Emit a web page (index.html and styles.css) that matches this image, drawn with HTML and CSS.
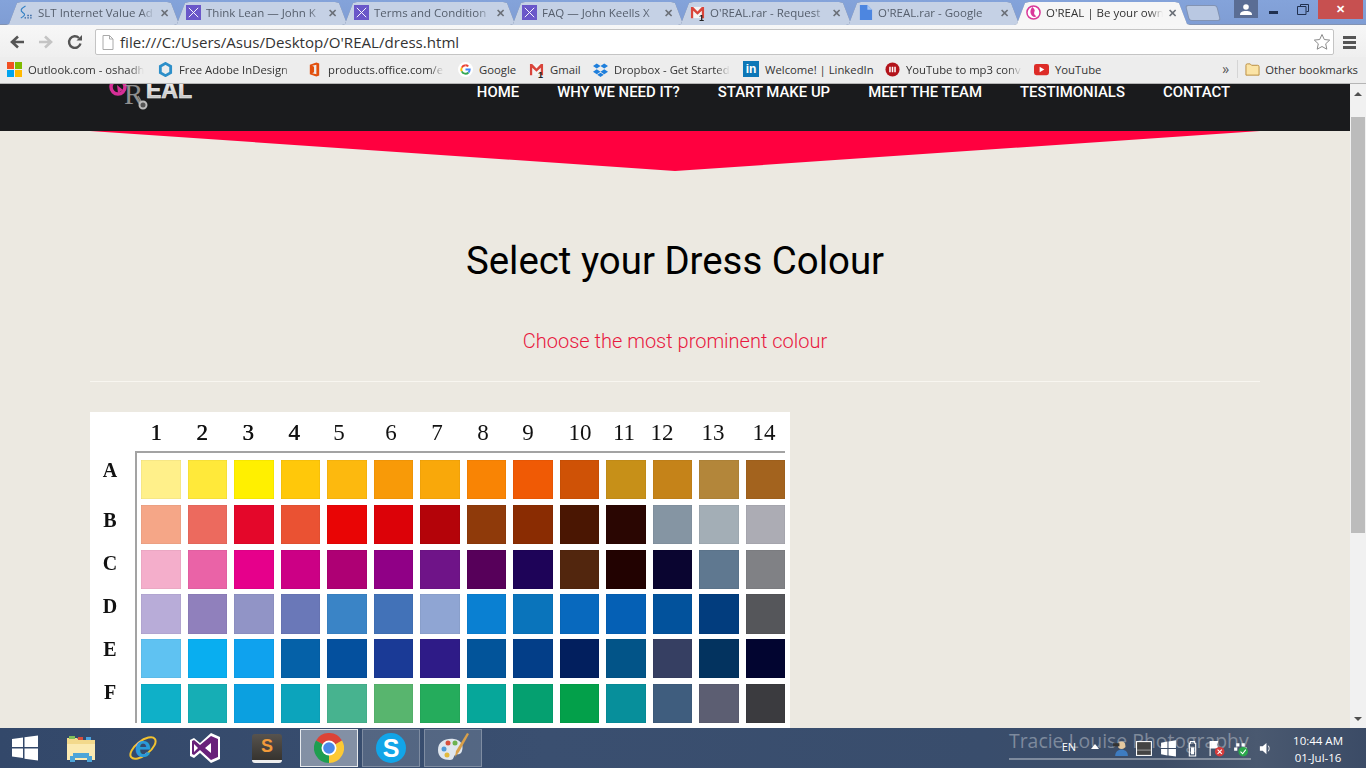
FILE: index.html
```html
<!DOCTYPE html>
<html lang="en">
<head>
<meta charset="utf-8">
<title>O'REAL | Be your own</title>
<link rel="stylesheet" href="styles.css">
</head>
<body>
<svg class="sprite" aria-hidden="true">
  <symbol id="i-x" viewBox="0 0 16 16"><rect width="16" height="16" fill="#6a57c9"/><path d="M3 3l10 10M13 3L3 13" stroke="#fff" stroke-width="1" fill="none"/></symbol>
  <symbol id="i-slt" viewBox="0 0 16 16"><path d="M8 1C3 4 2 6 5 8s3 3-2 6" stroke="#2f7fc4" stroke-width="1.2" fill="none"/><path d="M7 13h1.500v1.500H7zM10 13h1.500v1.500H10zM13 13h1.500v1.500H13zM10 10.500h1.500V12H10zM13 10.500h1.500V12H13z" fill="#2a5f9e"/></symbol>
  <symbol id="i-gmail" viewBox="0 0 16 16"><path d="M1 2h14v12H1z" fill="#f4f4f4"/><path d="M1 2h2.400L8 7l4.600-5H15v12h-2.400V6L8 10.500 3.400 6v8H1z" fill="#d9453b"/></symbol>
  <symbol id="i-doc" viewBox="0 0 16 16"><path d="M2 0h8l5 5v11H2z" fill="#4d86e0"/><path d="M10 0l5 5h-5z" fill="#a9c6f2"/></symbol>
  <symbol id="i-oreal" viewBox="0 0 16 16"><circle cx="8" cy="8" r="7" fill="#fff" stroke="#d9389a" stroke-width="1.600"/><path d="M7 2c-3 3-3 7 0 10 1 1 3 1 4 0-2-1-3-3-2-5 1-1 0-3-2-5z" fill="#d9389a"/></symbol>
</svg>

<div class="tabstrip">
  <div class="tab"><svg class="fav"><use href="#i-slt"/></svg><span class="tab-title">SLT Internet Value Ad</span><span class="tab-x">✕</span></div>
  <div class="tab"><svg class="fav"><use href="#i-x"/></svg><span class="tab-title">Think Lean — John K</span><span class="tab-x">✕</span></div>
  <div class="tab"><svg class="fav"><use href="#i-x"/></svg><span class="tab-title">Terms and Condition</span><span class="tab-x">✕</span></div>
  <div class="tab"><svg class="fav"><use href="#i-x"/></svg><span class="tab-title">FAQ — John Keells X</span><span class="tab-x">✕</span></div>
  <div class="tab"><span class="badged"><svg class="fav"><use href="#i-gmail"/></svg><span class="badge">1</span></span><span class="tab-title">O'REAL.rar - Request</span><span class="tab-x">✕</span></div>
  <div class="tab"><svg class="fav"><use href="#i-doc"/></svg><span class="tab-title">O'REAL.rar - Google</span><span class="tab-x">✕</span></div>
  <div class="tab tab-active"><svg class="fav"><use href="#i-oreal"/></svg><span class="tab-title">O'REAL | Be your own</span><span class="tab-x">✕</span></div>
  <div class="newtab"></div>
  <div class="winbtns">
    <div class="profile"><svg width="12" height="11" viewBox="0 0 12 11"><circle cx="6" cy="3" r="2.800" fill="#fff"/><path d="M0 11c0-3 2-4 6-4s6 1 6 4z" fill="#fff"/></svg></div>
    <div class="winbtn"><span class="min"></span></div>
    <div class="winbtn"><svg width="12" height="11" viewBox="0 0 12 11"><path d="M3.500 2.500V.5h8v7h-2M.5 2.500h8.500v8H.5z" fill="none" stroke="#20304f"/></svg></div>
    <div class="close">✕</div>
  </div>
</div>

<div class="toolbar">
  <svg class="navicon" viewBox="0 0 16 16"><path d="M15 8H4M9 2.500L3 8l6 5.500" fill="none" stroke="#555" stroke-width="2.600"/></svg>
  <svg class="navicon" viewBox="0 0 16 16"><path d="M1 8h11M7 2.500L13 8l-6 5.500" fill="none" stroke="#c4c4c4" stroke-width="2.600"/></svg>
  <svg class="navicon" viewBox="0 0 16 16"><path d="M13.500 9.500A5.800 5.800 0 1 1 12 4" fill="none" stroke="#555" stroke-width="2.400"/><path d="M9.500 6.500H15V1z" fill="#555"/></svg>
  <div class="omnibox">
    <svg class="pageicon" width="12" height="15" viewBox="0 0 12 15"><path d="M1 .5h6.500l3.500 3.500v10.500H1z" fill="#fff" stroke="#aaa"/><path d="M7.500.5V4H11" fill="none" stroke="#aaa"/></svg>
    <span class="url">file:///C:/Users/Asus/Desktop/O'REAL/dress.html</span>
    <svg class="star" width="18" height="18" viewBox="0 0 18 18"><path d="M9 1.500l2.300 5 5.400.6-4 3.700 1.100 5.400L9 13.500l-4.800 2.700 1.100-5.400-4-3.700 5.400-.6z" fill="#fff" stroke="#8a8a8a"/></svg>
  </div>
  <div class="menu"><span></span><span></span><span></span></div>
</div>

<div class="bookmarks">
  <div class="bm-grid">
    <div class="bm"><svg class="bmi" viewBox="0 0 16 16"><path d="M0 0h7.500v7.500H0z" fill="#f25022"/><path d="M8.500 0H16v7.500H8.500z" fill="#7fba00"/><path d="M0 8.500h7.500V16H0z" fill="#00a4ef"/><path d="M8.500 8.500H16V16H8.500z" fill="#ffb900"/></svg><span class="bm-t bm-fade">Outlook.com - oshadh</span></div>
    <div class="bm"><svg class="bmi" viewBox="0 0 16 16"><path d="M8 1.500l5.500 3.200v6.600L8 14.500l-5.500-3.200V4.700z" fill="none" stroke="#2d8fc9" stroke-width="3"/></svg><span class="bm-t bm-fade">Free Adobe InDesign</span></div>
    <div class="bm"><svg class="bmi" viewBox="0 0 16 16"><path d="M10 .5L3 3v10l7 2.500 3-1.200V1.700zM10 3v10L5.500 12l2-1V5l-2-1z" fill="#e2500e"/></svg><span class="bm-t bm-fade">products.office.com/e</span></div>
    <div class="bm"><svg class="bmi" viewBox="0 0 16 16"><circle cx="8" cy="8" r="8" fill="#fff"/><path d="M8 3.500a4.500 4.500 0 0 0-4 2.500" fill="none" stroke="#ea4335" stroke-width="2"/><path d="M4 6a4.500 4.500 0 0 0 0 4" fill="none" stroke="#fbbc05" stroke-width="2"/><path d="M4 10a4.500 4.500 0 0 0 7.200 1.200" fill="none" stroke="#34a853" stroke-width="2"/><path d="M11.200 11.200A4.500 4.500 0 0 0 12.500 8H8" fill="none" stroke="#4285f4" stroke-width="2"/><path d="M8 3.500a4.500 4.500 0 0 1 3 1.200" fill="none" stroke="#ea4335" stroke-width="2"/></svg><span class="bm-t">Google</span></div>
    <div class="bm"><span class="badged"><svg class="bmi" viewBox="0 0 16 16"><use href="#i-gmail"/></svg><span class="badge">1</span></span><span class="bm-t">Gmail</span></div>
    <div class="bm"><svg class="bmi" viewBox="0 0 16 16"><path d="M4 1.500L0 4.300l4 2.700 4-2.700zM12 1.500L8 4.300l4 2.700 4-2.700zM4 7.600L0 10.300 4 13l4-2.700zM12 7.600l-4 2.700 4 2.700 4-2.700zM4.500 13.700l3.500 2.300 3.500-2.300L8 11.400z" fill="#1f7fdc"/></svg><span class="bm-t bm-fade">Dropbox - Get Started</span></div>
    <div class="bm"><span class="li">in</span><span class="bm-t">Welcome! | LinkedIn</span></div>
    <div class="bm"><svg class="bmi" viewBox="0 0 16 16"><circle cx="8" cy="8" r="7.500" fill="#b3141b"/><path d="M4.500 5h1.600v6H4.500zM7.200 5h1.600v6H7.200zM9.900 5h1.600v6H9.900z" fill="#fff"/></svg><span class="bm-t bm-fade">YouTube to mp3 conv</span></div>
    <div class="bm"><svg class="bmi" viewBox="0 0 16 16"><rect y="2" width="16" height="12" rx="2.500" fill="#dd2c28"/><path d="M6 5l5 3-5 3z" fill="#fff"/></svg><span class="bm-t">YouTube</span></div>
  </div>
  <div class="bm-right">
    <span class="chev">»</span>
    <span class="bm-sep"></span>
    <svg class="bmi" viewBox="0 0 16 16"><path d="M1 14V3.500C1 2.500 1.500 2 2.500 2h3l1.500 1.500h6.500c1 0 1.500.5 1.500 1.500v9z" fill="#fbe4a6" stroke="#b98c3d"/></svg>
    <span class="bm-t">Other bookmarks</span>
  </div>
</div>

<div class="viewport">
  <div class="page">
    <header class="site-header">
      <svg class="logo" width="90" height="28" viewBox="0 0 90 28">
        <defs><linearGradient id="chrome" x1="0" y1="0" x2="0" y2="1"><stop offset="0" stop-color="#fff"/><stop offset="1" stop-color="#b5b5b5"/></linearGradient></defs>
        <circle cx="10" cy="3" r="7" fill="none" stroke="#d62f97" stroke-width="3.500"/>
        <path d="M9 1l6 5-5 3z" fill="#d62f97"/>
        <text x="16" y="20" class="logo-r">R</text>
        <path d="M30 12l4 7" stroke="#8a8a8a" stroke-width="1.500"/>
        <circle cx="35" cy="21" r="3.500" fill="#555" stroke="#bbb" stroke-width="2"/>
        <text x="38" y="14" class="logo-eal" fill="url(#chrome)">EAL</text>
      </svg>
      <nav class="site-nav">
        <a>Home</a><a>Why we need it?</a><a>Start make up</a><a>Meet the team</a><a>Testimonials</a><a>Contact</a>
      </nav>
    </header>
    <div class="wedge"></div>
    <main class="container">
      <h1 class="title">Select your Dress Colour</h1>
      <p class="subtitle">Choose the most prominent colour</p>
      <hr class="rule">
      <div class="chart">
        <div class="chart-cols">
          <span>1</span><span>2</span><span>3</span><span>4</span><span>5</span><span>6</span><span>7</span><span>8</span><span>9</span><span>10</span><span>11</span><span>12</span><span>13</span><span>14</span>
        </div>
        <div class="chart-body">
          <div class="chart-rows"><span>A</span><span>B</span><span>C</span><span>D</span><span>E</span><span>F</span></div>
          <div class="swatches">
            <i style="background:#fff08a"></i><i style="background:#ffe93a"></i><i style="background:#fff000"></i><i style="background:#ffc80a"></i><i style="background:#fdb90e"></i><i style="background:#f89a08"></i><i style="background:#f9a80a"></i><i style="background:#f98404"></i><i style="background:#f05a05"></i><i style="background:#cf5206"></i><i style="background:#c79018"></i><i style="background:#c58319"></i><i style="background:#b3863a"></i><i style="background:#a3631e"></i>
            <i style="background:#f5a687"></i><i style="background:#ec6a5e"></i><i style="background:#e4072a"></i><i style="background:#ea5233"></i><i style="background:#e90505"></i><i style="background:#dc0208"></i><i style="background:#b40309"></i><i style="background:#8f3a0a"></i><i style="background:#8a2c02"></i><i style="background:#4a1602"></i><i style="background:#2a0602"></i><i style="background:#8595a3"></i><i style="background:#a3aeb6"></i><i style="background:#acacb4"></i>
            <i style="background:#f4aecb"></i><i style="background:#ea63a7"></i><i style="background:#e6008b"></i><i style="background:#cc0085"></i><i style="background:#ae0074"></i><i style="background:#900086"></i><i style="background:#6f1488"></i><i style="background:#57005a"></i><i style="background:#1e0358"></i><i style="background:#52260e"></i><i style="background:#220201"></i><i style="background:#0a0530"></i><i style="background:#5f7890"></i><i style="background:#808185"></i>
            <i style="background:#b8acd8"></i><i style="background:#9080bc"></i><i style="background:#9194c6"></i><i style="background:#6a78b8"></i><i style="background:#3a84c6"></i><i style="background:#4272b8"></i><i style="background:#8fa5d3"></i><i style="background:#0a80d2"></i><i style="background:#0a74bb"></i><i style="background:#0869be"></i><i style="background:#0560b5"></i><i style="background:#02529c"></i><i style="background:#023d7e"></i><i style="background:#55565a"></i>
            <i style="background:#5fc2f2"></i><i style="background:#09aef0"></i><i style="background:#0fa2ee"></i><i style="background:#0561a8"></i><i style="background:#04509e"></i><i style="background:#1a3a96"></i><i style="background:#2e1b87"></i><i style="background:#02549a"></i><i style="background:#033e88"></i><i style="background:#021f5e"></i><i style="background:#025488"></i><i style="background:#363f62"></i><i style="background:#03335f"></i><i style="background:#020530"></i>
            <i style="background:#0fb0c8"></i><i style="background:#16aeb5"></i><i style="background:#0ba0e0"></i><i style="background:#0ca4bc"></i><i style="background:#47b38f"></i><i style="background:#58b56e"></i><i style="background:#25ac5c"></i><i style="background:#06a79a"></i><i style="background:#05a070"></i><i style="background:#03a04a"></i><i style="background:#078f9b"></i><i style="background:#3f5d7e"></i><i style="background:#5c5e72"></i><i style="background:#3b3b3f"></i>
          </div>
        </div>
      </div>
    </main>
  </div>
  <div class="scrollbar">
    <svg class="sb-arrow" width="16" height="16" viewBox="0 0 16 16"><path d="M4 10l4-4 4 4z" fill="#505050"/></svg>
    <div class="sb-thumb"></div>
    <svg class="sb-arrow sb-down" width="16" height="16" viewBox="0 0 16 16"><path d="M4 6l4 4 4-4z" fill="#505050"/></svg>
  </div>
</div>

<footer class="taskbar">
  <div class="start"><svg width="26" height="26" viewBox="0 0 26 26"><path d="M0 4l11-1.500V12H0zM12.500 2.200L26 .5V12H12.500zM0 13.500h11V23L0 21.500zM12.500 13.500H26V25.500L12.500 23.800z" fill="#fff"/></svg></div>
  <div class="task"><svg width="32" height="32" viewBox="0 0 32 32"><path d="M2 6h10l2 2h16v20H2z" fill="#f3d98c"/><path d="M2 12h28v16H2z" fill="#fbeab2"/><path d="M4 4h6v3H4z" fill="#7fbf5a"/><path d="M13 5h5v3h-5z" fill="#d8503e"/><path d="M21 5h5v3h-5z" fill="#4aa3df"/><path d="M8 21h16v3h3v6h-5v-4H10v4H5v-6h3z" fill="#4da5d8"/></svg></div>
  <div class="task"><svg width="32" height="32" viewBox="0 0 32 32"><ellipse cx="16" cy="16" rx="15" ry="7" transform="rotate(-38 16 16)" fill="none" stroke="#f2c230" stroke-width="2"/><text x="16" y="25" class="ie-e">e</text></svg></div>
  <div class="task"><svg width="32" height="32" viewBox="0 0 32 32"><path d="M22 1l9 4v22l-9 4-11-10-6 5-4-2V8l4-2 6 5z" fill="#fff"/><path d="M22 4l7 3v18l-7 3-11-10-6 5-2-1V9l2-1 6 5zM22 11l-6 5 6 5zM5 12v8l4-4z" fill="#68217a" fill-rule="evenodd"/></svg></div>
  <div class="task"><div class="sublime">S</div></div>
  <div class="task task-on"><svg width="30" height="30" viewBox="0 0 30 30"><path d="M15 15L2 7.500A15 15 0 0 1 28 7.500z" fill="#dc4437"/><path d="M15 15L28 7.500A15 15 0 0 1 15 30z" fill="#fcc934"/><path d="M15 15V30A15 15 0 0 1 2 7.500z" fill="#1e9e50"/><circle cx="15" cy="15" r="7.500" fill="#fff"/><circle cx="15" cy="15" r="5.800" fill="#4a89e8"/></svg></div>
  <div class="task task-open"><div class="skype">S</div></div>
  <div class="task task-open"><svg width="34" height="32" viewBox="0 0 34 32"><path d="M2 18C2 9 10 6 18 7c7 1 10 6 8 12-1 4-5 3-7 4-2 2-1 5-5 5-7 0-12-3-12-10z" fill="#dfe6ee"/><circle cx="8" cy="17" r="2.500" fill="#4f9ad8"/><circle cx="12" cy="11" r="2.500" fill="#d8503e"/><circle cx="19" cy="11" r="2.500" fill="#6db24f"/><circle cx="11" cy="23" r="2.500" fill="#e2b93b"/><path d="M31 1l2 1-10 18-4 5 1-6z" fill="#d9a04a"/></svg></div>
  <div class="wallpaper-text">Tracie Louise Photography</div>
  <div class="tray">
    <span class="lang">EN</span>
    <svg class="tray-up" width="8" height="5" viewBox="0 0 8 5"><path d="M0 5l4-5 4 5z" fill="#fff"/></svg>
    <svg class="tray-i" viewBox="0 0 16 16"><circle cx="9" cy="5" r="3.500" fill="#e5c9a0"/><path d="M3 15c0-4 3-6 6-6s6 2 6 6z" fill="#3e7cc0"/><path d="M1 3h6v3H1z" fill="#333"/></svg>
    <svg class="tray-i" viewBox="0 0 16 16"><rect x=".5" y="1.500" width="14" height="13" fill="#444" stroke="#fff"/><path d="M1 9.500h13" stroke="#999"/></svg>
    <svg class="tray-i" viewBox="0 0 16 16"><path d="M1 2.500l6-1V7.500H1zM8 1.300l7-1V7.500H8zM1 8.500h6v6l-6-1zM8 8.500h7v7l-7-1z" fill="#fff"/></svg>
    <svg class="tray-i" viewBox="0 0 16 16"><path d="M5 3h1V1.500h4V3h1v12H5z" fill="none" stroke="#fff"/><path d="M6.500 7h3v6.500h-3z" fill="#fff"/></svg>
    <svg class="tray-i" viewBox="0 0 16 16"><path d="M2 1v14M3 1.500h6l-1 3 1 3H3z" stroke="#fff" fill="#fff"/><circle cx="11" cy="11" r="4.500" fill="#d83b3b"/><path d="M9 9l4 4M13 9l-4 4" stroke="#fff"/></svg>
    <svg class="tray-i" viewBox="0 0 16 16"><path d="M4 3h3v3H4zM9 3h3v3H9zM2 7h3v3H2zM11 7h3v3h-3z" fill="#fff"/><circle cx="10.500" cy="11" r="4.500" fill="#2aa84a"/><path d="M8 11l2 2 3-4" stroke="#fff" fill="none"/></svg>
    <svg class="tray-i tray-vol" viewBox="0 0 16 16"><path d="M2 5.500h3L9 2v12L5 10.500H2z" fill="#fff"/><path d="M11 5c1.200 2 1.200 4 0 6" stroke="#fff" fill="none"/></svg>
    <div class="clock"><span>10:44 AM</span><span>01-Jul-16</span></div>
  </div>
</footer>
</body>
</html>
```

FILE: styles.css
```css
* { box-sizing: border-box; }
html, body { margin: 0; height: 100%; }
body {
  width: 1366px;
  height: 768px;
  overflow: hidden;
  display: flex;
  flex-direction: column;
  font-family: "Open Sans", "Liberation Sans", sans-serif;
  background: #ece9e1;
}
.sprite { display: none; }

/* tab strip */
.tabstrip {
  height: 25px;
  flex: none;
  display: flex;
  padding-left: 6px;
  background: linear-gradient(#84a3da, #7f9dd4);
  box-shadow: inset 0 -1px 0 #8293b3;
  position: relative;
}
.tab {
  position: relative;
  isolation: isolate;
  width: 176px;
  height: 25px;
  margin-right: -8px;
  padding: 0 13px 0 12px;
  display: flex;
  align-items: center;
  gap: 5px;
  font-size: 11.500px;
  color: #555e6c;
  filter: drop-shadow(0 0 .6px #5d6f92);
}
.tab::before {
  content: "";
  position: absolute;
  inset: 2px 0 0;
  z-index: -1;
  background: #c5d1e5;
  clip-path: polygon(0 100%, 3px 96%, 11px 4%, 15px 0, calc(100% - 15px) 0, calc(100% - 11px) 4%, calc(100% - 3px) 96%, 100% 100%);
}
.tab-active { z-index: 2; color: #333; }
.tab-active::before { background: #f6f6f6; }
.fav { width: 15px; height: 15px; flex: none; }
.tab-title {
  flex: 1;
  min-width: 0;
  white-space: nowrap;
  overflow: hidden;
  -webkit-mask-image: linear-gradient(90deg, #000 88%, transparent 100%);
  mask-image: linear-gradient(90deg, #000 88%, transparent 100%);
}
.tab-x { flex: none; font-size: 11px; font-weight: 700; color: #6b7078; }
.badged { position: relative; display: flex; flex: none; }
.badge {
  position: absolute;
  right: 1px;
  bottom: -3px;
  font: 700 9px/9px "Liberation Sans", sans-serif;
  color: #222;
}
.newtab {
  width: 30px;
  height: 14px;
  margin: 6px 0 0 6px;
  background: #b9c8e2;
  border-radius: 2px;
  transform: skewX(14deg);
  box-shadow: 0 0 0 1px #8293b3;
}
.winbtns { margin-left: auto; display: flex; align-items: flex-start; padding-right: 3px; }
.profile {
  width: 24px;
  height: 18px;
  background: #5a6d94;
  display: flex;
  align-items: center;
  justify-content: center;
}
.winbtn {
  width: 30px;
  height: 19px;
  display: flex;
  align-items: center;
  justify-content: center;
}
.min { width: 9px; height: 3px; margin-top: 6px; background: #20304f; }
.close {
  width: 45px;
  height: 19px;
  background: #c75050;
  color: #fff;
  font: 700 11px/19px "Liberation Sans", sans-serif;
  text-align: center;
}

/* toolbar */
.toolbar {
  height: 32px;
  flex: none;
  display: flex;
  align-items: center;
  padding: 2px 0 0 9px;
  gap: 13px;
  background: linear-gradient(#f7f7f7, #efefef);
}
.navicon { width: 16px; height: 16px; flex: none; }
.omnibox {
  width: 1239px;
  height: 26px;
  margin-left: -1px;
  display: flex;
  align-items: center;
  padding: 0 2px 0 6px;
  background: #fff;
  border: 1px solid #c4c4c4;
  border-radius: 2px;
  flex: none;
}
.pageicon { flex: none; margin-right: 6px; }
.url { font-size: 15.100px; color: #333; white-space: nowrap; font-family: "Open Sans", sans-serif; }
.star { margin-left: auto; }
.menu {
  display: flex;
  flex-direction: column;
  gap: 2px;
  width: 13px;
  margin-left: -4px;
}
.menu span { height: 3px; background: #555; }

/* bookmarks */
.bookmarks {
  height: 27px;
  flex: none;
  display: flex;
  align-items: center;
  padding: 0 0 2px 7px;
  background: #ededed;
  border-bottom: 1px solid #b5b5b5;
  font-size: 11.300px;
  color: #333;
}
.bm-grid {
  display: grid;
  grid-template-columns: 151px 149px 151px 71px 64px 150px 142px 149px auto;
}
.bm { display: flex; align-items: center; gap: 6px; white-space: nowrap; min-width: 0; }
.bmi { width: 15px; height: 15px; flex: none; }
.bm-fade {
  width: 116px;
  overflow: hidden;
  -webkit-mask-image: linear-gradient(90deg, #000 88%, transparent 100%);
  mask-image: linear-gradient(90deg, #000 88%, transparent 100%);
}
.li {
  width: 16px;
  height: 16px;
  flex: none;
  background: #0d77b7;
  color: #fff;
  font: 700 12px/16px "Liberation Sans", sans-serif;
  text-align: center;
}
.bm-right {
  margin-left: auto;
  display: flex;
  align-items: center;
  gap: 5px;
  padding-right: 8px;
  white-space: nowrap;
}
.chev { font-size: 14px; line-height: 14px; color: #555; margin-right: 3px; }
.bm-sep { width: 1px; height: 18px; background: #d5d5d5; margin-right: 2px; }

/* viewport */
.viewport { height: 644px; flex: none; display: flex; overflow: hidden; }
.page { width: 1350px; flex: none; overflow: hidden; background: #ece9e1; }
.site-header {
  height: 47px;
  background: #1a1b1d;
  display: flex;
  align-items: flex-start;
  padding-left: 108px;
}
.logo { flex: none; }
.logo-r { font: 400 29px "Liberation Serif", serif; fill: #8f8f8f; }
.logo-eal {
  font: 700 23px "Liberation Sans", sans-serif;
  stroke: #f2f2f2;
  stroke-width: .6px;
}
.site-nav {
  margin-left: auto;
  padding: 0 120px 0 0;
  display: flex;
  gap: 38px;
}
.site-nav a {
  font: 500 14.900px/16px Roboto, sans-serif;
  color: #fff;
  text-transform: uppercase;
}
.wedge {
  width: 1170px;
  height: 40px;
  margin: 0 auto;
  background: #ff003f;
  clip-path: polygon(0 0, 100% 0, 50% 100%);
}
.container { width: 1170px; margin: 0 auto; }
.title {
  margin: 69px 0 0;
  font: 400 38.400px/42px Roboto, sans-serif;
  color: #000;
  text-align: center;
}
.subtitle {
  margin: 47px 0 0;
  font: 300 20px/24px Roboto, sans-serif;
  color: #e8183f;
  text-align: center;
}
.rule {
  height: 1px;
  margin: 28px 0 0;
  border: 0;
  background: #f8f6f0;
}

/* colour chart */
.chart {
  width: 700px;
  height: 340px;
  margin-top: 30px;
  background: #fff;
  filter: blur(.5px);
}
.chart-cols {
  height: 39px;
  display: grid;
  grid-template-columns: 46px 46px 46px 46px 44px 60px 32px 60px 30px 74px 14px 62px 40px 62px;
  padding: 5px 0 0 43px;
  font: 400 23px/32px "Liberation Serif", serif;
  color: #111;
}
.chart-cols span { display: flex; justify-content: center; }
.chart-cols span:nth-child(-n+4) { text-shadow: .4px 0 0 #111; }
.chart-body { display: flex; }
.chart-rows {
  width: 45px;
  flex: none;
  display: flex;
  flex-direction: column;
  align-items: center;
  padding-right: 5px;
  margin-top: 7px;
  font: 700 20px/24px "Liberation Serif", serif;
  color: #111;
  gap: 19px;
}
.chart-rows span:first-child { margin-bottom: 7px; }
.swatches {
  display: grid;
  width: 650px;
  grid-template-columns: repeat(14, 39.500px);
  grid-auto-rows: 39.300px;
  gap: 5.500px 7px;
  padding: 7px 0 0 4px;
  border-top: 2px solid #a3a3a3;
  border-left: 2px solid #a3a3a3;
  margin-right: 5px;
}
.swatches i { display: block; box-shadow: inset 0 0 1px rgba(0, 0, 0, .35); }

/* scrollbar */
.scrollbar {
  width: 16px;
  flex: none;
  background: #f1f1f1;
  display: flex;
  flex-direction: column;
  padding-top: 2px;
}
.sb-arrow { flex: none; }
.sb-thumb { height: 416px; margin: 15px 1px 0; background: #bcbcbc; }
.sb-down { margin-top: auto; margin-bottom: 1px; }

/* taskbar */
.taskbar {
  height: 40px;
  flex: none;
  position: relative;
  display: flex;
  align-items: center;
  background: linear-gradient(90deg, #33486a 0, #3a4f70 40%, #394d6c 72%, #3d4d66 85%, #4a5970 92%, #3b4b66 100%);
}
.start { width: 50px; height: 40px; flex: none; display: flex; align-items: center; justify-content: center; }
.task { width: 62px; height: 40px; flex: none; display: flex; align-items: center; justify-content: center; }
.task-on, .task-open { width: 58px; height: 38px; margin: 0 2px; }
.task-open { background: rgba(255, 255, 255, .14); border: 1px solid rgba(255, 255, 255, .25); }
.task-on { background: rgba(255, 255, 255, .38); border: 1px solid rgba(255, 255, 255, .8); }
.ie-e { font: 700 30px "Liberation Sans", sans-serif; fill: #2a9ad8; text-anchor: middle; }
.sublime {
  width: 30px;
  height: 29px;
  border-radius: 3px;
  background: linear-gradient(#57534e, #36332f);
  border-bottom: 3px solid #eee;
  color: #f29a3a;
  font: 700 18px/25px "Liberation Sans", sans-serif;
  text-align: center;
}
.skype {
  width: 30px;
  height: 30px;
  border-radius: 50%;
  background: #12a5e8;
  color: #fff;
  font: 700 25px/30px "Liberation Sans", sans-serif;
  text-align: center;
}
.wallpaper-text {
  position: absolute;
  left: 1009px;
  top: 0;
  height: 32px;
  width: 242px;
  border-bottom: 2px solid rgba(255, 255, 255, .35);
  font: 400 19.400px/25px "Open Sans", sans-serif;
  color: rgba(255, 255, 255, .35);
  white-space: nowrap;
}
.tray {
  margin-left: auto;
  position: relative;
  display: flex;
  align-items: center;
  height: 40px;
  padding-right: 23px;
  color: #fff;
  font-size: 12px;
}
.lang { margin-right: 15px; font-size: 11px; margin-top: -4px; }
.tray-up { margin-right: 13px; margin-top: -4px; }
.tray-i { width: 17px; height: 17px; margin-right: 7px; flex: none; }
.tray-vol { width: 15px; height: 15px; margin: 0 20px 0 2px; }
.clock {
  display: flex;
  flex-direction: column;
  align-items: center;
  font: 400 11.500px/17px "Open Sans", sans-serif;
  padding-top: 2px;
}
```
